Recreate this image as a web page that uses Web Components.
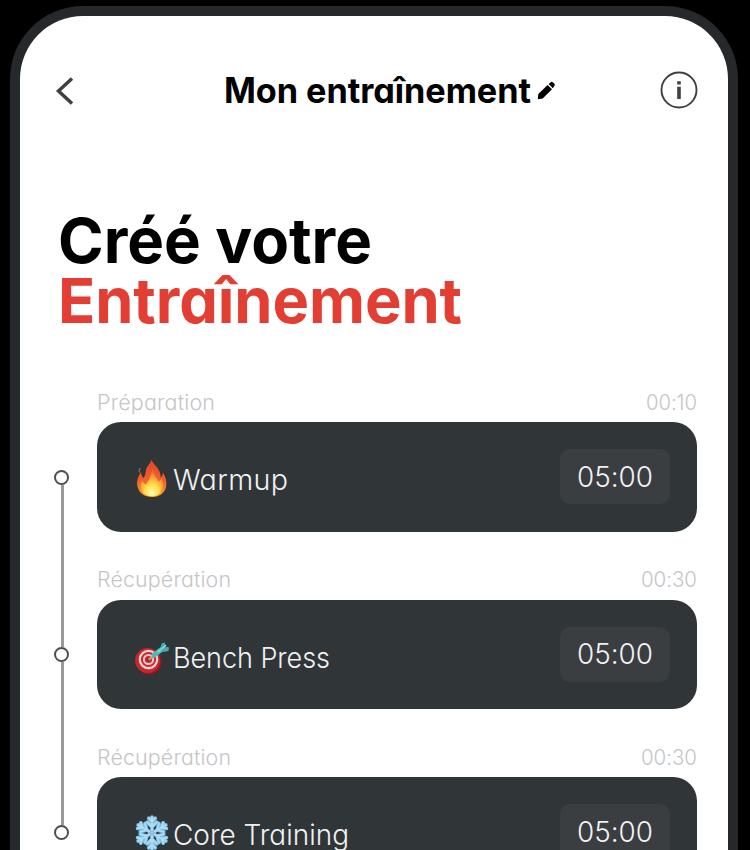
<!DOCTYPE html>
<html lang="fr">
<head>
<meta charset="utf-8">
<title>Mon entraînement</title>
<style>
html,body{margin:0;height:850px;overflow:hidden;background:#000}
body{font-family:Inter,"Open Sans",sans-serif;font-feature-settings:"cv11" 1,"ss03" 0}
</style>
</head>
<body>
<phone-frame>
  <top-bar>Mon entraînement</top-bar>
  <page-heading><span>Créé votre</span><span slot="accent">Entraînement</span></page-heading>
  <workout-list>
    <workout-step phase="Préparation" phase-width="118" rest="00:10" rest-width="51" name="Warmup" name-width="115" time="05:00" icon="fire"></workout-step>
    <workout-step phase="Récupération" phase-width="134" rest="00:30" rest-width="56" name="Bench Press" name-width="157" time="05:00" icon="target"></workout-step>
    <workout-step phase="Récupération" phase-width="134" rest="00:30" rest-width="56" name="Core Training" name-width="176" time="05:00" icon="snow"></workout-step>
  </workout-list>
</phone-frame>
<script>
// Text that fills a given width, partly by glyph width and partly by letter spacing.
class FitText extends HTMLElement{
  constructor(){super();this.attachShadow({mode:'open'}).innerHTML=`<style>:host{display:block;white-space:nowrap}span{display:inline-block;transform-origin:0 50%}</style><span><slot></slot></span>`}
  connectedCallback(){
    const s=this.shadowRoot.querySelector('span'),n=[...this.textContent].length;
    const w=s.getBoundingClientRect().width,t=+this.getAttribute('width');
    if(w&&t){
      const r=t/w,k=r<1?Math.pow(r,.9):Math.pow(r,.6),d=(t/k-w)/(n-1);
      this.style.width=t+'px';s.style.letterSpacing=d+'px';s.style.transform='scaleX('+k+')';
    }
  }
}

class PhoneFrame extends HTMLElement{
  constructor(){super();this.attachShadow({mode:'open'}).innerHTML=`<style>
:host{display:block;box-sizing:border-box;width:728px;height:844px;border:10px solid #25292c;border-bottom:0;border-radius:73px 73px 0 0;background:#fff;overflow:hidden;position:relative;top:6px;margin-left:10px}
</style><slot></slot>`}
}

class TopBar extends HTMLElement{
  constructor(){super();this.attachShadow({mode:'open'}).innerHTML=`<style>
:host{display:flex;align-items:center;justify-content:space-between;height:40px;padding:54px 30px 0 34px;color:#000}
.t{display:flex;align-items:center;gap:6px;margin-left:43px}
fit-text{font-size:35px;line-height:40px;font-weight:700}
svg{display:block}
.back{margin-top:2px}
</style>
<svg class="back" width="22" height="30" viewBox="0 0 22 30" fill="none" stroke="#3d4144" stroke-width="3.5"><path d="M18 2.500 4.500 15 18 27.500"/></svg>
<div class="t"><fit-text width="307"></fit-text><svg width="18" height="19" viewBox="0 0 18 19"><path d="M.8 18.200 1.300 13 10.600 4 15 8.300 5.700 17.400Z"/><path d="M11.600 3.100 13.800 1.200Q15 .4 16.100 1.400L17.200 2.600Q18.200 3.700 17.400 4.800L15.900 7.300Z"/></svg></div>
<svg width="38" height="38" viewBox="0 0 38 38" fill="none" stroke="#3d4144"><circle cx="19" cy="19" r="17.500" stroke-width="1.900"/><path d="M19 15.800V28M19 10.200V13.600" stroke-width="3.600"/></svg>`;
  this.shadowRoot.querySelector('fit-text').textContent=this.textContent}
}

class PageHeading extends HTMLElement{
  constructor(){super();this.attachShadow({mode:'open'}).innerHTML=`<style>
:host{display:block;padding:100px 0 0 38px;font-size:62.500px;line-height:60.400px;font-weight:700;color:#000}
.a{color:#e23e33}
</style><fit-text width="314"></fit-text><fit-text class="a" width="404"></fit-text>`;
  const f=this.shadowRoot.querySelectorAll('fit-text');[...this.children].forEach((c,i)=>f[i].textContent=c.textContent)}
}

class WorkoutList extends HTMLElement{
  constructor(){super();this.attachShadow({mode:'open'}).innerHTML=`<style>:host{display:block;padding:58.900px 31px 0 34px}</style><slot></slot>`}
}

const flake=[0,60,120,180,240,300].map(a=>`<path transform="rotate(${a} 18 18)" d="M18 18V2M18 12 13.2 7.2M18 12 22.8 7.2M18 7 14.8 3.2M18 7 21.2 3.2"/>`).join('');
const icons={
fire:`<defs><linearGradient id="f" x1="0" y1="0" x2="0" y2="1"><stop offset="0" stop-color="#e2452a"/><stop offset=".55" stop-color="#f0602a"/><stop offset="1" stop-color="#ffa52a"/></linearGradient><radialGradient id="g" cx=".5" cy=".88" r=".8"><stop offset="0" stop-color="#fffbb0"/><stop offset=".4" stop-color="#ffdf4a"/><stop offset=".95" stop-color="#f4702a"/></radialGradient></defs>
<path fill="url(#f)" d="M17.500 0C19 3.500 23.500 7 25.500 11.500C26.500 13.800 26.700 15.500 26.500 17.500C28.500 16 28.800 14 29 12.500C31.500 16.500 33 21.500 32.200 26C31 33 25.500 37 18.500 37C10.500 37 5 33 3.500 26.500C2.300 21 4.200 16 7 12.200C7.500 15 8 16.500 9.500 18C11.500 16 11.300 13 12 10C12.800 6.200 15.500 4.500 17.500 0Z"/><path fill="url(#g)" d="M18.500 9C19.500 15 23 17 24.500 21.500C26.500 20.500 27 19.500 27.300 18.500C30 24 29 31 24.500 34.500C21 37 14 37 10.500 34C6.500 30.500 5.800 25 8 20.500C9 22.500 10 23.500 12 24.500C15 20 17 16 18.500 9Z"/><path d="M6.500 8Q4 10 5.500 12.500" fill="none" stroke="#a78176" stroke-width="1"/>`,
target:`<ellipse cx="15" cy="24" rx="12.500" ry="12.500" fill="#971821"/><ellipse cx="13.600" cy="22.500" rx="12.500" ry="12.500" fill="#c9262e"/><g fill="none"><circle cx="14.500" cy="21.500" r="8.700" stroke="#eed2d0" stroke-width="2.200"/><circle cx="14.500" cy="21.500" r="4.600" stroke="#f0cfcd" stroke-width="2"/></g><circle cx="14.500" cy="21.500" r="2" fill="#a91e28"/><path d="M14.500 21.500 24 16" stroke="#b9a464" stroke-width="2.400"/><path d="M20 17 27.500 11.500" stroke="#50b7bb" stroke-width="5" stroke-linecap="round"/><path d="M26 12 27.500 5.500 31 4.500 31 8.500 35 9.500 34.500 13 29 14Z" fill="#47a9b2"/><path d="M24 14 32 7" stroke="#9ae0df" stroke-width="1.300"/>`,
snow:`<g fill="none" stroke="#7fc1e6" stroke-width="3.700" stroke-linecap="round">${flake}</g><g fill="none" stroke="#b0dcf2" stroke-width="1.800" stroke-linecap="round">${flake}</g><circle cx="18" cy="18" r="2.500" fill="#94bfd5"/>`};

class WorkoutStep extends HTMLElement{
  constructor(){super();this.attachShadow({mode:'open'})}
  connectedCallback(){
    const a=k=>this.getAttribute(k);
    this.shadowRoot.innerHTML=`<style>
:host{display:grid;grid-template-columns:16px 600px;column-gap:27px;grid-template-rows:32.500px 109.500px;height:177.500px;font-weight:300}
.rail{grid-row:1/3;height:177.500px;display:flex;flex-direction:column;align-items:center}
.rail i{width:3px;flex:0 0 80px;background:#999}
.rail i:last-child{flex:1}
:host(:first-child) .rail i:first-child,:host(:last-child) .rail i:last-child{background:none}
.rail b{box-sizing:border-box;width:15px;height:15px;margin-right:1px;border:2px solid #4b4f51;border-radius:50%;background:#fff}
.meta{grid-column:2;display:flex;justify-content:space-between;font-size:21px;line-height:26px;color:#c5c6c7}
.card{grid-column:2;display:flex;align-items:center;box-sizing:border-box;padding:0 27px 0 37px;background:#303538;border-radius:24px;color:#f0f1f1;font-size:28px;line-height:34px}
.card svg{flex:none;margin:4px 3px 0 0;overflow:visible}
.name{margin-top:7px}
.chip{margin-left:auto;box-sizing:border-box;width:110px;height:55px;border-radius:10px;background:#3a3e41;display:flex;align-items:center;justify-content:center}
</style>
<div class="rail"><i></i><b></b><i></i></div>
<div class="meta"><fit-text width="${a('phase-width')}">${a('phase')}</fit-text><fit-text width="${a('rest-width')}">${a('rest')}</fit-text></div>
<div class="card"><svg width="36" height="37" viewBox="0 0 36 37">${icons[a('icon')]}</svg><fit-text class="name" width="${a('name-width')}">${a('name')}</fit-text><div class="chip"><fit-text width="76">${a('time')}</fit-text></div></div>`;
  }
}
customElements.define('phone-frame',PhoneFrame);
customElements.define('top-bar',TopBar);
customElements.define('page-heading',PageHeading);
customElements.define('workout-list',WorkoutList);
customElements.define('workout-step',WorkoutStep);
customElements.define('fit-text',FitText);
</script>
</body>
</html>
